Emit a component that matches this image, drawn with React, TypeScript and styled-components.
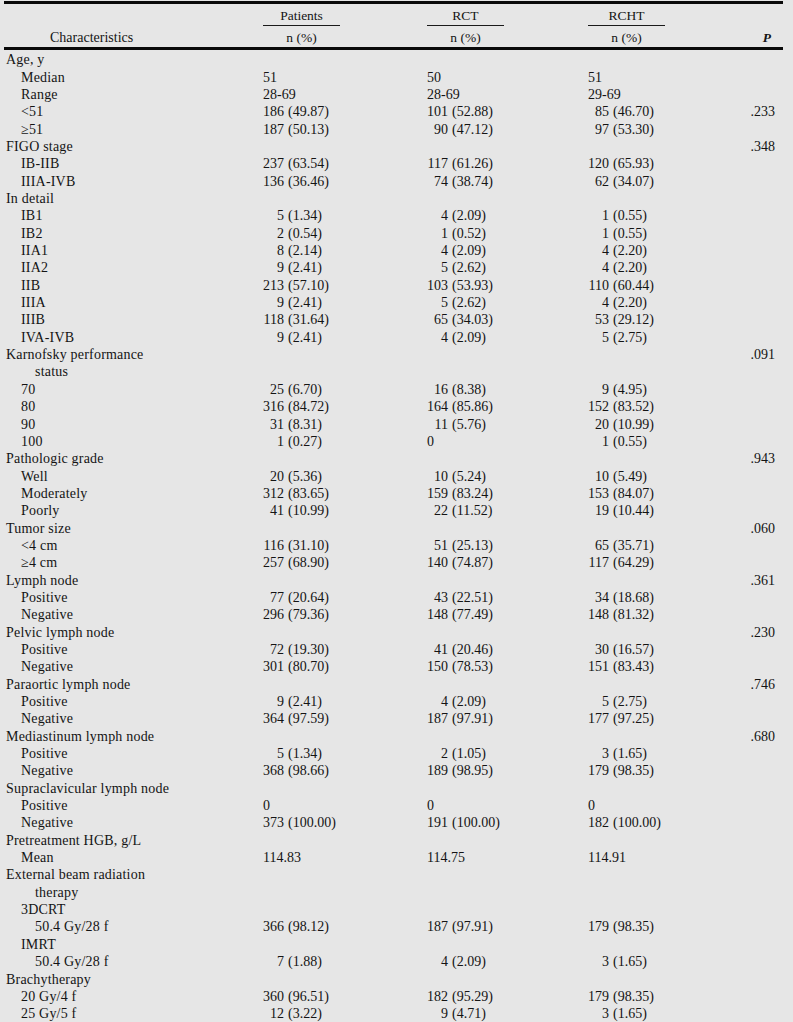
import React from "react";
import styled, { createGlobalStyle } from "styled-components";

const Global = createGlobalStyle`
  html, body { margin: 0; padding: 0; background: #e6e6e6; }
  body { font-family: "Liberation Serif", "Times New Roman", serif; color: #141414; }
`;

type Cell = string | [string, string];
type Row = { label: string; indent: 0 | 1 | 2; cells?: [Cell, Cell, Cell]; p?: string };

const rows: Row[] = [
  { label: "Age, y", indent: 0 },
  { label: "Median", indent: 1, cells: ["51", "50", "51"] },
  { label: "Range", indent: 1, cells: ["28-69", "28-69", "29-69"] },
  { label: "<51", indent: 1, cells: [["186", "49.87"], ["101", "52.88"], ["85", "46.70"]], p: ".233" },
  { label: "≥51", indent: 1, cells: [["187", "50.13"], ["90", "47.12"], ["97", "53.30"]] },
  { label: "FIGO stage", indent: 0, p: ".348" },
  { label: "IB-IIB", indent: 1, cells: [["237", "63.54"], ["117", "61.26"], ["120", "65.93"]] },
  { label: "IIIA-IVB", indent: 1, cells: [["136", "36.46"], ["74", "38.74"], ["62", "34.07"]] },
  { label: "In detail", indent: 0 },
  { label: "IB1", indent: 1, cells: [["5", "1.34"], ["4", "2.09"], ["1", "0.55"]] },
  { label: "IB2", indent: 1, cells: [["2", "0.54"], ["1", "0.52"], ["1", "0.55"]] },
  { label: "IIA1", indent: 1, cells: [["8", "2.14"], ["4", "2.09"], ["4", "2.20"]] },
  { label: "IIA2", indent: 1, cells: [["9", "2.41"], ["5", "2.62"], ["4", "2.20"]] },
  { label: "IIB", indent: 1, cells: [["213", "57.10"], ["103", "53.93"], ["110", "60.44"]] },
  { label: "IIIA", indent: 1, cells: [["9", "2.41"], ["5", "2.62"], ["4", "2.20"]] },
  { label: "IIIB", indent: 1, cells: [["118", "31.64"], ["65", "34.03"], ["53", "29.12"]] },
  { label: "IVA-IVB", indent: 1, cells: [["9", "2.41"], ["4", "2.09"], ["5", "2.75"]] },
  { label: "Karnofsky performance", indent: 0, p: ".091" },
  { label: "status", indent: 2 },
  { label: "70", indent: 1, cells: [["25", "6.70"], ["16", "8.38"], ["9", "4.95"]] },
  { label: "80", indent: 1, cells: [["316", "84.72"], ["164", "85.86"], ["152", "83.52"]] },
  { label: "90", indent: 1, cells: [["31", "8.31"], ["11", "5.76"], ["20", "10.99"]] },
  { label: "100", indent: 1, cells: [["1", "0.27"], "0", ["1", "0.55"]] },
  { label: "Pathologic grade", indent: 0, p: ".943" },
  { label: "Well", indent: 1, cells: [["20", "5.36"], ["10", "5.24"], ["10", "5.49"]] },
  { label: "Moderately", indent: 1, cells: [["312", "83.65"], ["159", "83.24"], ["153", "84.07"]] },
  { label: "Poorly", indent: 1, cells: [["41", "10.99"], ["22", "11.52"], ["19", "10.44"]] },
  { label: "Tumor size", indent: 0, p: ".060" },
  { label: "<4 cm", indent: 1, cells: [["116", "31.10"], ["51", "25.13"], ["65", "35.71"]] },
  { label: "≥4 cm", indent: 1, cells: [["257", "68.90"], ["140", "74.87"], ["117", "64.29"]] },
  { label: "Lymph node", indent: 0, p: ".361" },
  { label: "Positive", indent: 1, cells: [["77", "20.64"], ["43", "22.51"], ["34", "18.68"]] },
  { label: "Negative", indent: 1, cells: [["296", "79.36"], ["148", "77.49"], ["148", "81.32"]] },
  { label: "Pelvic lymph node", indent: 0, p: ".230" },
  { label: "Positive", indent: 1, cells: [["72", "19.30"], ["41", "20.46"], ["30", "16.57"]] },
  { label: "Negative", indent: 1, cells: [["301", "80.70"], ["150", "78.53"], ["151", "83.43"]] },
  { label: "Paraortic lymph node", indent: 0, p: ".746" },
  { label: "Positive", indent: 1, cells: [["9", "2.41"], ["4", "2.09"], ["5", "2.75"]] },
  { label: "Negative", indent: 1, cells: [["364", "97.59"], ["187", "97.91"], ["177", "97.25"]] },
  { label: "Mediastinum lymph node", indent: 0, p: ".680" },
  { label: "Positive", indent: 1, cells: [["5", "1.34"], ["2", "1.05"], ["3", "1.65"]] },
  { label: "Negative", indent: 1, cells: [["368", "98.66"], ["189", "98.95"], ["179", "98.35"]] },
  { label: "Supraclavicular lymph node", indent: 0 },
  { label: "Positive", indent: 1, cells: ["0", "0", "0"] },
  { label: "Negative", indent: 1, cells: [["373", "100.00"], ["191", "100.00"], ["182", "100.00"]] },
  { label: "Pretreatment HGB, g/L", indent: 0 },
  { label: "Mean", indent: 1, cells: ["114.83", "114.75", "114.91"] },
  { label: "External beam radiation", indent: 0 },
  { label: "therapy", indent: 2 },
  { label: "3DCRT", indent: 1 },
  { label: "50.4 Gy/28 f", indent: 2, cells: [["366", "98.12"], ["187", "97.91"], ["179", "98.35"]] },
  { label: "IMRT", indent: 1 },
  { label: "50.4 Gy/28 f", indent: 2, cells: [["7", "1.88"], ["4", "2.09"], ["3", "1.65"]] },
  { label: "Brachytherapy", indent: 0 },
  { label: "20 Gy/4 f", indent: 1, cells: [["360", "96.51"], ["182", "95.29"], ["179", "98.35"]] },
  { label: "25 Gy/5 f", indent: 1, cells: [["12", "3.22"], ["9", "4.71"], ["3", "1.65"]] },
];

const COLS = "259px 164px 161px 157px 38px";

const Page = styled.div`
  padding: 1px 10px 0 4px;
  font-size: 14px;
`;

const Table = styled.div`
  width: 779px;
  border-top: 3px solid #0a0a0a;
`;

const Header = styled.div`
  display: grid;
  grid-template-columns: ${COLS};
  grid-template-rows: 22px 21px;
  align-items: end;
  border-bottom: 3px solid #0a0a0a;
`;

const GroupHead = styled.div<{ $col: number }>`
  grid-column: ${(p) => p.$col};
  grid-row: 1;
  width: 77px;
  text-align: center;
  line-height: 17px;
  padding-bottom: 1px;
  border-bottom: 1.5px solid #1a1a1a;
  font-size: 13.5px;
`;

const SubHead = styled.div<{ $col: number }>`
  grid-column: ${(p) => p.$col};
  grid-row: 2;
  width: 77px;
  text-align: center;
  line-height: 17px;
  padding-bottom: 1px;
  font-size: 13.5px;
`;

const CharHead = styled.div`
  grid-column: 1;
  grid-row: 2;
  padding-left: 46px;
  line-height: 17px;
  padding-bottom: 1px;
  font-size: 14px;
`;

const PHead = styled.div`
  grid-column: 5;
  grid-row: 2;
  text-align: right;
  padding-right: 12px;
  line-height: 17px;
  padding-bottom: 1px;
  font-style: italic;
  font-weight: bold;
  font-size: 13.5px;
`;

const Body = styled.div`
  padding-top: 1.3px;
`;

const DataRow = styled.div`
  display: grid;
  grid-template-columns: ${COLS};
  height: 17.35px;
  line-height: 17.35px;
  white-space: nowrap;
`;

const Label = styled.div<{ $indent: number }>`
  padding-left: ${(p) => [2, 17, 31][p.$indent]}px;
  letter-spacing: 0.2px;
`;

const ValueCell = styled.div`
  display: flex;
`;

const Count = styled.span`
  display: inline-block;
  width: 21px;
  text-align: right;
  margin-right: 4px;
`;

const PCell = styled.div`
  text-align: right;
  padding-right: 8px;
`;

const Value: React.FC<{ cell?: Cell }> = ({ cell }) => {
  if (!cell) return <ValueCell />;
  if (typeof cell === "string") return <ValueCell>{cell}</ValueCell>;
  return (
    <ValueCell>
      <Count>{cell[0]}</Count>
      <span>({cell[1]})</span>
    </ValueCell>
  );
};

export default function App() {
  return (
    <Page>
      <Global />
      <Table>
        <Header>
          <GroupHead $col={2}>Patients</GroupHead>
          <GroupHead $col={3}>RCT</GroupHead>
          <GroupHead $col={4}>RCHT</GroupHead>
          <CharHead>Characteristics</CharHead>
          <SubHead $col={2}>n (%)</SubHead>
          <SubHead $col={3}>n (%)</SubHead>
          <SubHead $col={4}>n (%)</SubHead>
          <PHead>P</PHead>
        </Header>
        <Body>
          {rows.map((r, i) => (
            <DataRow key={i}>
              <Label $indent={r.indent}>{r.label}</Label>
              <Value cell={r.cells?.[0]} />
              <Value cell={r.cells?.[1]} />
              <Value cell={r.cells?.[2]} />
              <PCell>{r.p ?? ""}</PCell>
            </DataRow>
          ))}
        </Body>
      </Table>
    </Page>
  );
}
